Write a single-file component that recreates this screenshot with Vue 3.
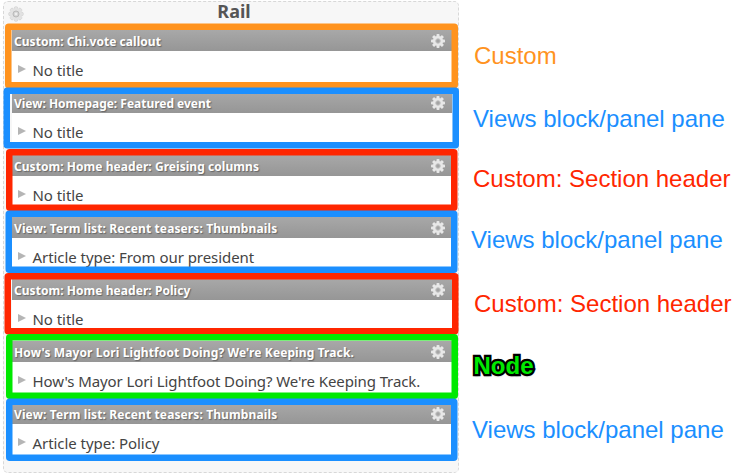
<script setup>
const panes = [
  { title: 'Custom: Chi.vote callout', body: 'No title', kind: 'custom', label: 'Custom', frame: [5, 23.5, 453, 65] },
  { title: 'View: Homepage: Featured event', body: 'No title', kind: 'view', label: 'Views block/panel pane', frame: [3.5, 87.5, 455.5, 61] },
  { title: 'Custom: Home header: Greising columns', body: 'No title', kind: 'section', label: 'Custom: Section header', frame: [6, 149, 451.5, 62] },
  { title: 'View: Term list: Recent teasers: Thumbnails', body: 'Article type: From our president', kind: 'view', label: 'Views block/panel pane', frame: [5.5, 210.5, 452, 62.5] },
  { title: 'Custom: Home header: Policy', body: 'No title', kind: 'section', label: 'Custom: Section header', frame: [4.5, 273, 454, 61.5] },
  { title: "How's Mayor Lori Lightfoot Doing? We're Keeping Track.", body: "How's Mayor Lori Lightfoot Doing? We're Keeping Track.", kind: 'node', label: 'Node', frame: [6, 334, 452, 65] },
  { title: 'View: Term list: Recent teasers: Thumbnails', body: 'Article type: Policy', kind: 'view', label: 'Views block/panel pane', frame: [6, 398.5, 451.5, 62.5] },
]
const colors = { custom: '#ff931e', view: '#1b8fff', section: '#ff2600', node: '#00e900' }
const teeth = [0, 45, 90, 135, 180, 225, 270, 315]
</script>

<template>
  <main class="page">
    <section class="rail">
      <header class="rail-head">
        <svg class="rail-gear" viewBox="0 0 16 16">
          <g fill="#e3e3e3" stroke="#cfcfcf" stroke-width=".6">
            <rect v-for="a in teeth" :key="a" x="6.2" y=".7" width="3.6" height="4" rx="1.4" :transform="`rotate(${a} 8 8)`" />
          </g>
          <circle cx="8" cy="8" r="5.5" fill="#e2e2e2" />
          <circle cx="8" cy="8" r="3" fill="#d1d1d1" stroke="#b9b9b9" stroke-width="1" />
          <circle cx="8" cy="8" r="1.4" fill="#eee" />
        </svg>
        <h1>Rail</h1>
      </header>
      <article v-for="(p, i) in panes" :key="i" :class="['pane', 'p' + i]">
        <div class="bar">
          <span :class="['title', 't' + i]">{{ p.title }}</span>
          <svg class="gear" viewBox="0 0 14 14">
            <g fill="#e8e8e8">
              <rect v-for="a in teeth" :key="a" x="5.5" y="0" width="3" height="4" rx=".8" :transform="`rotate(${a} 7 7)`" />
              <circle cx="7" cy="7" r="5.1" />
            </g>
            <circle cx="7" cy="7" r="2.3" fill="#a4a4a4" stroke="#c5c5c5" stroke-width="1" />
          </svg>
        </div>
        <div class="body">
          <svg class="arrow" viewBox="0 0 8 8"><path d="M0 0L8 4L0 8Z" fill="#b5b5b5" /></svg>
          <span :class="['text', 'b' + i]">{{ p.body }}</span>
        </div>
      </article>
    </section>
    <aside class="legend">
      <span v-for="(p, i) in panes" :key="i" :class="['label', p.kind, 'l' + i]">{{ p.label }}</span>
    </aside>
    <svg class="frames" viewBox="0 0 742 476">
      <rect
        v-for="(p, i) in panes" :key="i"
        :x="p.frame[0] + 3.25" :y="p.frame[1] + 3.25"
        :width="p.frame[2] - 6.5" :height="p.frame[3] - 6.5"
        rx=".5" fill="none" :stroke="colors[p.kind]" stroke-width="6.5" stroke-linejoin="round"
      />
    </svg>
  </main>
</template>

<style>
body { margin: 0; background: #fff; }
</style>

<style scoped>
.page { position: relative; display: flex; width: 742px; height: 476px; overflow: hidden; background: #fff; }
.rail {
  box-sizing: border-box; width: 456px; height: 472px; margin: 1px 0 0 3px;
  border: 1px dashed #d8d8d8; border-radius: 5px; background: #f7f7f7;
  font-family: "Noto Sans", "Open Sans", sans-serif;
}
.rail-head { display: flex; height: 28px; align-items: flex-start; }
.rail-gear { width: 16px; height: 16px; margin: 4px 0 0 4px; flex: none; }
h1 { flex: 1; margin: -4px 14px 0 0; text-align: center; font-size: 18px; line-height: 26px; font-weight: 700; color: #555; }
.pane { box-sizing: border-box; width: 440px; height: 55px; margin: 0 0 7px 8px; background: #fff; }
.p1 { margin-bottom: 8px; }
.bar {
  display: flex; align-items: center; justify-content: space-between; box-sizing: border-box;
  height: 21px; padding: 0 7px 0 2px; background: linear-gradient(#a8a8a8, #969696);
}
.title { padding-top: 2px; font-size: 12px; font-weight: 700; line-height: 21px; letter-spacing: .05px; color: #fff; white-space: nowrap; text-shadow: 1px 1px 1px #666; }
.t1 { letter-spacing: -.02px; }
.t3, .t5, .t6 { letter-spacing: .11px; }
.gear { width: 14px; height: 14px; }
.body { display: flex; padding: 7px 0 0 6px; }
.arrow { width: 8px; height: 8px; margin: 6.5px 6.5px 0 0; flex: none; }
.text { font-size: 15px; line-height: 24px; letter-spacing: -.05px; color: #444; white-space: nowrap; }
.b5 { letter-spacing: -.1px; }
.legend {
  display: grid; grid-template-rows: 63px 60px 61px 64px 62px 64px 40px;
  margin: 42px 0 0 14px; align-content: start;
  font-family: "Liberation Sans", Arial, sans-serif; font-size: 24px; line-height: 28px;
}
.label { white-space: nowrap; }
.l0, .l4 { padding-left: 1px; }
.l3 { margin-left: -2px; }
.l6 { margin-left: -1px; }
.custom { color: #ff931e; }
.view { color: #1b8fff; }
.section { color: #ff2600; }
.node {
  padding-left: .5px; color: #00e900; font-weight: 700; font-size: 24px;
  -webkit-text-stroke: 4.5px #000; paint-order: stroke fill;
  text-shadow: 0 2px 2px rgba(0, 0, 0, .5);
}
.frames { position: absolute; left: 0; top: 0; width: 742px; height: 476px; pointer-events: none; }
</style>
